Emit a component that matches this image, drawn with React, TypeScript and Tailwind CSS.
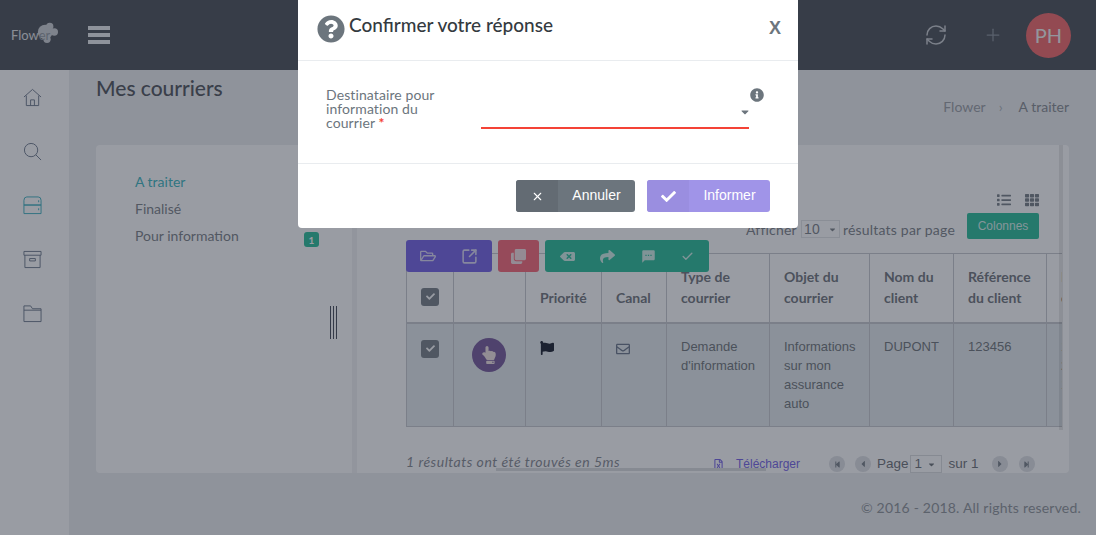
import { FaQuestionCircle, FaInfoCircle, FaCheck, FaRegFolderOpen, FaClone, FaBackspace, FaShare, FaFlag, FaRegEnvelope, FaList, FaTh, FaHandPointUp, FaRegFileExcel, FaStepBackward, FaStepForward, FaCaretLeft, FaCaretRight, FaCaretDown } from 'react-icons/fa';
import { MdTextsms } from 'react-icons/md';
import { LuSquareArrowOutUpRight, LuRefreshCw, LuPlus, LuCheck, LuX } from 'react-icons/lu';

function SideIcon({ children, active }: { children: React.ReactNode; active?: boolean }) {
  return (
    <div className={`flex h-[54px] items-center justify-center pr-[5px] ${active ? 'text-[#2aa9b8]' : 'text-[#5f6b80]'}`}>
      <svg width="19" height="19" viewBox="0 0 20 20" fill="none" stroke="currentColor" strokeWidth="1">
        {children}
      </svg>
    </div>
  );
}

function Sidebar() {
  return (
    <aside className="w-[69px] shrink-0 bg-white">
      <SideIcon>
        <path d="M1 9.5 10 1.5l9 8M3.5 8v10.5h13V8M8 18.5v-6h4v6" />
      </SideIcon>
      <SideIcon>
        <circle cx="8.5" cy="8.5" r="7" />
        <path d="m13.5 13.5 5.5 5.5" />
      </SideIcon>
      <SideIcon active>
        <path d="M1 9.5V4.5Q1 1 4 1h12q3 0 3 3.5v5zM1 9.5h18v9H1z" />
        <path d="M16 5.500h1M16 14h1" strokeWidth="2" />
      </SideIcon>
      <SideIcon>
        <path d="M1 1.500h18v4H1zM2 5.500v13h16v-13M7 9h6v2.500H7z" />
      </SideIcon>
      <SideIcon>
        <path d="M1 18.500V2h7l2 3h9v13.500zM1 6.500h18" />
      </SideIcon>
    </aside>
  );
}

function Topbar() {
  return (
    <header className="flex h-[70px] shrink-0 items-center bg-[#3a4048] pl-[11px] pr-[25px]">
      <div className="relative w-[77px] text-[13px] leading-[16px] text-[#e0e2e4]">
        <svg className="absolute left-[25px] top-[-6px]" width="22" height="22" viewBox="0 0 24 24" fill="#c9ccd0">
          <circle cx="10" cy="12" r="8" />
          <circle cx="15" cy="6" r="4" />
          <circle cx="20" cy="12" r="4" />
          <circle cx="12" cy="20" r="4" />
        </svg>
        <span className="relative">Flow<span className="text-[#8a9098]">er</span></span>
      </div>
      <div className="flex w-[22px] flex-col gap-[3px]">
        <div className="h-[4px] bg-[#e9ecef]" />
        <div className="h-[4px] bg-[#e9ecef]" />
        <div className="h-[4px] bg-[#e9ecef]" />
      </div>
      <div className="ml-auto flex items-center">
        <LuRefreshCw className="size-[24px] text-[#c2c6cb]" strokeWidth={1.5} />
        <LuPlus className="ml-[35px] size-[20px] text-[#7f8791]" strokeWidth={1.5} />
        <div className="ml-[23px] flex size-[45px] items-center justify-center rounded-full bg-[#f25a5c] text-[20px] text-[#f3f3f3]">
          PH
        </div>
      </div>
    </header>
  );
}

const headers = ['Priorité', 'Canal', 'Type de courrier', 'Objet du courrier', 'Nom du client', 'Référence du client', 'Date du courrier'];

function MailTable() {
  const th = 'border border-[#c3c5ca] px-[14px] pb-[14px] align-bottom text-left font-bold leading-[21px] text-[#646970]';
  const td = 'border border-[#c3c5ca] px-[14px] pt-[13px] align-top leading-[19px]';
  return (
    <div className="overflow-hidden">
      <table className="w-[760px] table-fixed border-collapse text-[14px]">
        <colgroup>
          <col className="w-[47px]" />
          <col className="w-[72px]" />
          <col className="w-[76px]" />
          <col className="w-[65px]" />
          <col className="w-[103px]" />
          <col className="w-[100px]" />
          <col className="w-[84px]" />
          <col className="w-[93px]" />
          <col className="w-[120px]" />
        </colgroup>
        <thead>
          <tr className="h-[69px] border-b-2 border-b-[#c3c5ca]">
            <th className={th}>
              <div className="mb-[2px] flex size-[18px] items-center justify-center rounded-[3px] bg-[#6c757d] text-white">
                <FaCheck className="size-[9px]" />
              </div>
            </th>
            <th className={th} />
            {headers.map((h) => (
              <th key={h} className={th}>{h}</th>
            ))}
          </tr>
        </thead>
        <tbody className="font-['Liberation_Sans',sans-serif] text-[13px] text-[#62686e]">
          <tr className="h-[104px] bg-[#e2e9ec]">
            <td className={td}>
              <div className="mt-[3px] flex size-[18px] items-center justify-center rounded-[3px] bg-[#6c757d] text-white">
                <FaCheck className="size-[9px]" />
              </div>
            </td>
            <td className={td}>
              <div className="ml-[4px] mt-[1px] flex size-[34px] items-center justify-center rounded-full bg-[#6a4a92] text-[#f0e0e0]">
                <FaHandPointUp className="size-[18px]" />
              </div>
            </td>
            <td className={td}><FaFlag className="mt-[4px] size-[14px] text-[#050a1a]" /></td>
            <td className={td}><FaRegEnvelope className="mt-[5px] size-[14px] text-[#5f6b80]" /></td>
            <td className={td}>Demande d'information</td>
            <td className={td}>Informations sur mon assurance auto</td>
            <td className={td}>DUPONT</td>
            <td className={td}>123456</td>
            <td className={td}>10/<br />2018<br />17</td>
          </tr>
        </tbody>
      </table>
    </div>
  );
}

function Pager() {
  const nav = 'flex size-[16px] items-center justify-center rounded-full bg-[#dcdee2] text-[#6c757d]';
  return (
    <div className="mt-[27px] flex h-[20px] items-center text-[14px] text-[#5f656b]">
      <span className="mb-[6px] w-[307px] italic tracking-[0.5px] text-[#7b8087]">1 résultats ont été trouvés en 5ms</span>
      <FaRegFileExcel className="size-[11px] text-[#6854e4]" />
      <span className="ml-[12px] w-[93px] font-['Liberation_Sans',sans-serif] text-[12px] text-[#6854e4]">Télécharger</span>
      <div className={nav}><FaStepBackward className="size-[7px]" /></div>
      <div className={`ml-[10px] ${nav}`}><FaCaretLeft className="size-[10px]" /></div>
      <span className="ml-[6px] font-['Liberation_Sans',sans-serif] text-[13.5px]">Page</span>
      <div className="ml-[1px] flex h-[18px] w-[32px] items-center justify-between border border-[#d8dadd] pl-[4px] pr-[5px] font-['Liberation_Sans',sans-serif] text-[13.5px]">
        1<FaCaretDown className="size-[9px]" />
      </div>
      <span className="ml-[7px] font-['Liberation_Sans',sans-serif] text-[13.5px]">sur 1</span>
      <div className={`ml-[13px] ${nav}`}><FaCaretRight className="size-[10px]" /></div>
      <div className={`ml-[11px] ${nav}`}><FaStepForward className="size-[7px]" /></div>
    </div>
  );
}

function Toolbar() {
  return (
    <div className="absolute left-[49px] top-[95px] z-10 flex gap-[6px] text-white">
      <div className="flex h-[32px] w-[86px] items-center justify-around rounded-[3px] bg-[#6854e4] px-[2px]">
        <FaRegFolderOpen className="size-[16px] text-[#d8d4f5]" />
        <LuSquareArrowOutUpRight className="size-[17px] text-[#d8d4f5]" strokeWidth={2.2} />
      </div>
      <div className="flex h-[32px] w-[41px] items-center justify-center rounded-[3px] bg-[#f85a6c]">
        <FaClone className="size-[15px] text-[#f5dce0]" />
      </div>
      <div className="flex h-[32px] w-[164px] items-center justify-around rounded-[3px] bg-[#16b890] px-[2px] text-[#cdeee6]">
        <FaBackspace className="size-[15px]" />
        <FaShare className="size-[15px]" />
        <MdTextsms className="size-[15px]" />
        <LuCheck className="size-[13px]" strokeWidth={2.5} />
      </div>
    </div>
  );
}

function Modal() {
  return (
    <div className="absolute left-[298px] top-0 z-30 h-[228px] w-[500px] rounded-b-[4px] bg-white">
      <div className="flex h-[61px] items-start border-b border-[#e9ecef] pl-[19px] pr-[17px]">
        <FaQuestionCircle className="mt-[15px] size-[28px] text-[#6c757d]" />
        <h2 className="ml-[4px] mt-[12px] text-[19px] font-medium leading-[25px] text-[#343a40]">Confirmer votre réponse</h2>
        <span className="ml-auto mt-[17px] font-['Liberation_Sans',sans-serif] text-[18px] font-bold leading-[22px] text-[#6c757d]">X</span>
      </div>
      <div className="flex h-[103px] border-b border-[#e9ecef] pl-[28px] pt-[27px]">
        <div className="w-[155px]">
          <label className="block w-[125px] text-[14px] leading-[14px] tracking-[0.1px] text-[#6c757d]">
            Destinataire pour information du courrier <span className="font-bold text-[#f44336]">*</span>
          </label>
        </div>
        <div className="relative h-[41px] w-[268px] border-b-2 border-[#f44336]">
          <FaCaretDown className="absolute bottom-[9px] right-[-2px] size-[12px] text-[#6c757d]" />
          <FaInfoCircle className="absolute right-[-15px] top-0 size-[14px] text-[#6c757d]" />
        </div>
      </div>
      <div className="flex justify-end gap-[12px] pr-[28px] pt-[16px] font-['Liberation_Sans',sans-serif] text-[14px] text-white">
        <button className="flex h-[32px] w-[119px] items-center overflow-hidden rounded-[3px] bg-[#6c757d]">
          <span className="flex h-full w-[42px] items-center justify-center bg-[#636b73]"><LuX className="size-[13px]" strokeWidth={2} /></span>
          <span className="flex-1 pb-[2px] text-center">Annuler</span>
        </button>
        <button className="flex h-[32px] w-[123px] items-center overflow-hidden rounded-[3px] bg-[#a094e8]">
          <span className="flex h-full w-[42px] items-center justify-center bg-[#9a8ee0]"><FaCheck className="size-[15px]" /></span>
          <span className="flex-1 pb-[2px] text-center">Informer</span>
        </button>
      </div>
    </div>
  );
}

export default function App() {
  return (
    <div className="relative flex h-screen flex-col overflow-hidden bg-[#eaecee] font-['Lato',sans-serif]">
      <Topbar />
      <div className="flex flex-1">
        <Sidebar />
        <main className="min-w-0 flex-1 px-[27px]">
          <div className="flex h-[75px] justify-between">
            <h1 className="mt-[4px] text-[21px] font-medium leading-[28px] text-[#40444c]">Mes courriers</h1>
            <div className="mt-[27px] flex gap-[13px] text-[14px] leading-[20px]">
              <span className="text-[#92969c]">Flower</span>
              <span className="text-[#a9adb2]">›</span>
              <span className="ml-[3px] text-[#7d8288]">A traiter</span>
            </div>
          </div>
          <div className="flex h-[328px] rounded-[4px] bg-white">
            <div className="relative w-[256px] shrink-0 pl-[39px] pt-[23px] text-[14px] leading-[27px] text-[#71767c]">
              <div className="text-[#2cb0ba]">A traiter</div>
              <div>Finalisé</div>
              <div>Pour information</div>
              <span className="absolute left-[208px] top-[87px] flex size-[15px] items-center justify-center rounded-[3px] bg-[#16b890] text-[10px] font-bold leading-none text-white">1</span>
              <div className="absolute left-[234px] top-[161px] flex gap-[2px]">
                <div className="h-[33px] w-[1px] bg-[#343a48]" />
                <div className="h-[33px] w-[1px] bg-[#343a48]" />
                <div className="h-[33px] w-[1px] bg-[#343a48]" />
              </div>
            </div>
            <div className="w-[5px] shrink-0 bg-[#f0f1f3]" />
            <div className="relative z-0 min-w-0 flex-1 pl-[49px] pr-[7px] pt-[48px]">
              <div className="flex justify-end gap-[14px] pr-[23px] text-[#6c757d]">
                <FaList className="size-[14px]" />
                <FaTh className="size-[14px]" />
              </div>
              <div className="mt-[6px] flex h-[26px] items-center justify-end pr-[23px] text-[14px] tracking-[0.2px] text-[#71767c]">
                <span className="mt-[6px]">Afficher</span>
                <div className="ml-[4px] mt-[6px] flex h-[18px] w-[39px] items-center justify-between border border-[#e0e2e5] px-[2px] font-['Liberation_Sans',sans-serif]">
                  10<FaCaretDown className="size-[9px]" />
                </div>
                <span className="ml-[3px] mt-[6px]">résultats par page</span>
                <button className="ml-[12px] h-[26px] w-[72px] rounded-[2px] bg-[#16b890] font-['Liberation_Sans',sans-serif] text-[12px] tracking-normal text-[#d8f0ea]">Colonnes</button>
              </div>
              <Toolbar />
              <div className="mt-[14px]"><MailTable /></div>
              <Pager />
              <div className="absolute left-[139px] top-[323px] h-[3px] w-[270px] bg-[#d8dadd]" />
              <div className="absolute right-[6px] top-0 h-[285px] w-[4px] bg-black/10" />
            </div>
          </div>
          <div className="mr-[-12px] mt-[27px] text-right text-[14px] leading-[16px] tracking-[0.2px] text-[#858a90]">© 2016 - 2018. All rights reserved.</div>
        </main>
      </div>
      <div className="absolute inset-0 z-20 bg-[#343a4880]" />
      <Modal />
    </div>
  );
}
